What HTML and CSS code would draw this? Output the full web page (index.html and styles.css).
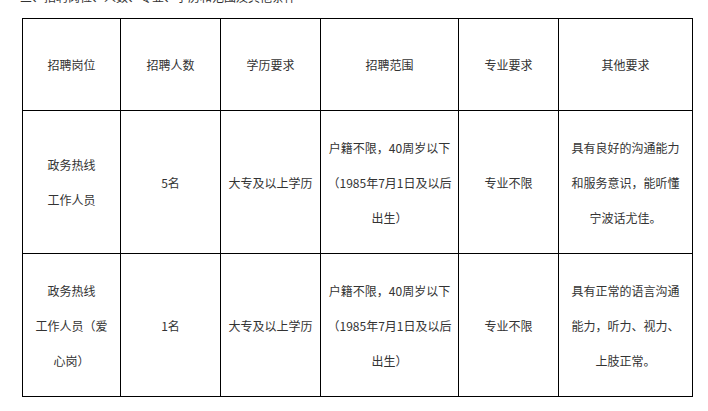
FILE: index.html
```html
<!DOCTYPE html>
<html lang="zh-CN">
<head>
<meta charset="utf-8">
<link rel="stylesheet" href="styles.css">
</head>
<body>
<div class="page">
  <p class="title">三、招聘岗位、人数、专业、学历和范围及其他条件</p>
  <table class="jobs">
    <colgroup>
      <col class="c1"><col class="c2"><col class="c3"><col class="c4"><col class="c5"><col class="c6">
    </colgroup>
    <tr class="head">
      <td>招聘岗位</td>
      <td>招聘人数</td>
      <td>学历要求</td>
      <td>招聘范围</td>
      <td>专业要求</td>
      <td>其他要求</td>
    </tr>
    <tr class="row">
      <td>政务热线<br>工作人员</td>
      <td>5名</td>
      <td>大专及以上学历</td>
      <td>户籍不限，40周岁以下<br>（1985年7月1日及以后<br>出生）</td>
      <td>专业不限</td>
      <td>具有良好的沟通能力<br>和服务意识，能听懂<br>宁波话尤佳。</td>
    </tr>
    <tr class="row">
      <td>政务热线<br>工作人员（爱<br>心岗）</td>
      <td>1名</td>
      <td>大专及以上学历</td>
      <td>户籍不限，40周岁以下<br>（1985年7月1日及以后<br>出生）</td>
      <td>专业不限</td>
      <td>具有正常的语言沟通<br>能力，听力、视力、<br>上肢正常。</td>
    </tr>
  </table>
</div>
</body>
</html>
```
FILE: styles.css
```css
html, body {
  margin: 0;
  padding: 0;
  background: #ffffff;
}
.page {
  padding-left: 20px;
  font-family: "Noto Sans CJK SC", "Noto Sans", sans-serif;
  font-size: 12px;
  color: #333333;
}
.title {
  margin: -11px 0 0 0;
  line-height: 16px;
  height: 16px;
}
.jobs {
  margin-top: 13px;
  margin-left: 2px;
  border-collapse: collapse;
  table-layout: fixed;
  width: 670px;
}
.c1 { width: 98px; }
.c2 { width: 100px; }
.c3 { width: 100px; }
.c4 { width: 138px; }
.c5 { width: 100px; }
.c6 { width: 134px; }
.jobs td {
  border: 1px solid #000000;
  text-align: center;
  vertical-align: middle;
  padding: 0;
  line-height: 35px;
  white-space: nowrap;
}
.head { height: 92px; }
.row { height: 143px; }
```
